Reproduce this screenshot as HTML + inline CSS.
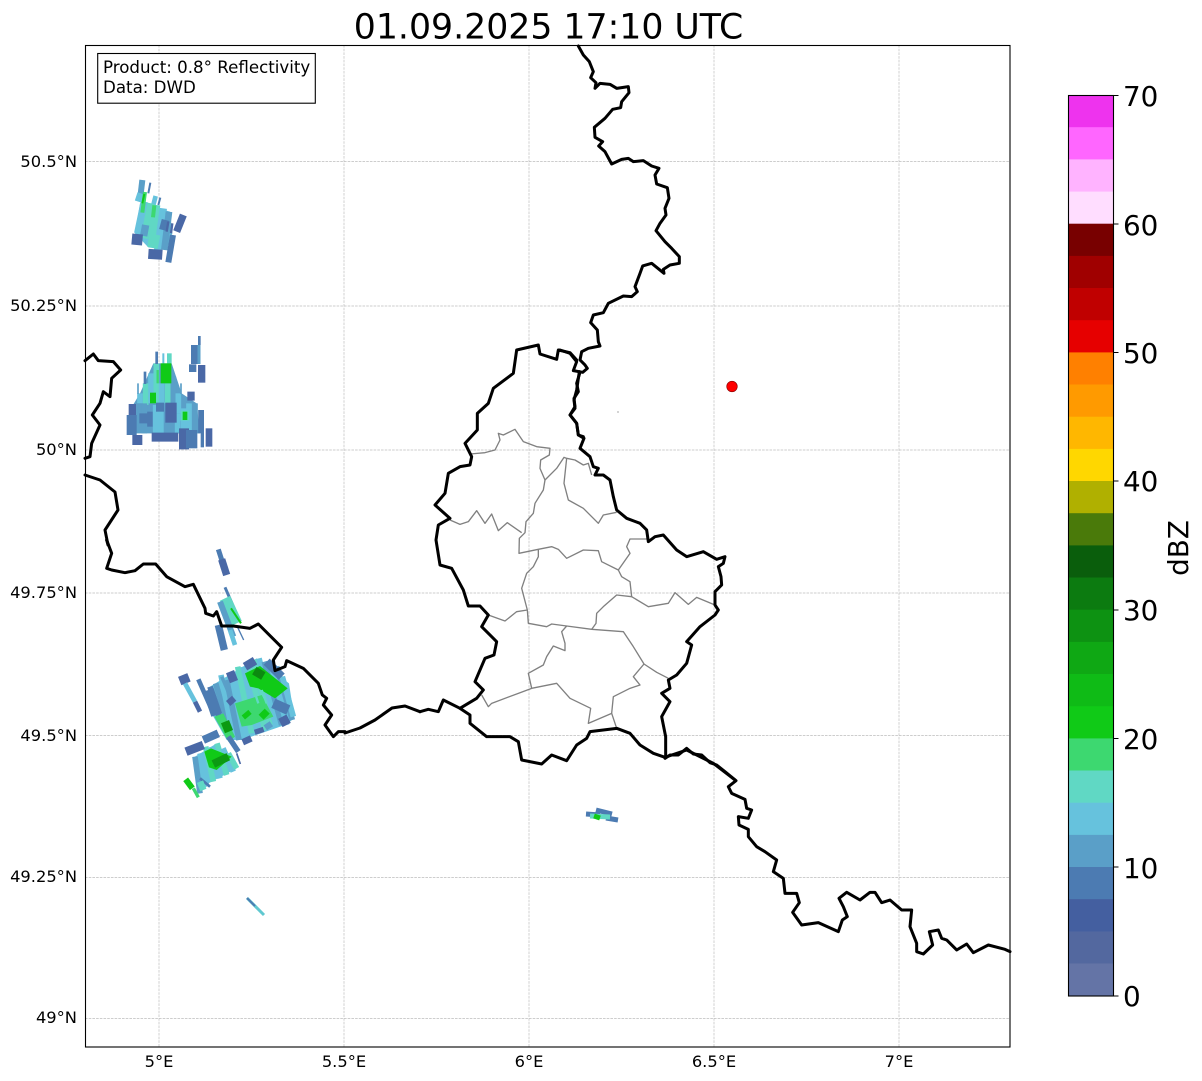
<!DOCTYPE html>
<html><head><meta charset="utf-8"><style>
html,body{margin:0;padding:0;background:#fff}
svg{display:block}
text{font-family:"DejaVu Sans",sans-serif;fill:#000}
.a{font-size:16.300px}
.t{font-size:16.670px}
.c{font-size:27.800px}
</style></head><body>
<svg width="1202" height="1081" viewBox="0 0 1202 1081" xmlns="http://www.w3.org/2000/svg">
<rect width="1202" height="1081" fill="#fff"/>
<text x="548.500" y="38.500" text-anchor="middle" style="font-size:34.700px">01.09.2025 17:10 UTC</text>
<g stroke="#bdbdbd" stroke-width=".7" stroke-dasharray="2.6 1.1" fill="none">
<path d="M159 45V1047M344 45V1047M529 45V1047M714 45V1047M899 45V1047"/>
<path d="M85 161.500H1010M85 306H1010M85 450H1010M85 593H1010M85 735.500H1010M85 877.500H1010M85 1018.500H1010"/>
</g>

<!-- radar blob 1 & 2 -->
<g transform="translate(85,170) scale(.33333)" fill="none" stroke-linecap="butt">
<path fill="#66c2dd" d="M165,100L255,125 262,190 245,240 190,232 150,190Z"/>
<path fill="#5a9fc8" d="M205,580H260L290,670 335,700 345,790H135V720L165,670Z"/>
<path stroke="#5a9fc8" stroke-width="18" d="M172,30L165,90"/>
<path stroke="#66c2dd" stroke-width="22" d="M168,70L160,95"/>
<path stroke="#66c2dd" stroke-width="14" d="M212,78L205,105"/>
<path stroke="#4c7bb2" stroke-width="6" d="M196,38L190,70M226,83L220,105"/>
<path stroke="#66c2dd" stroke-width="22" d="M178,95L158,190"/>
<path stroke="#60d8c4" stroke-width="22" d="M198,100L178,205"/>
<path stroke="#60d8c4" stroke-width="22" d="M215,105L198,232"/>
<path stroke="#66c2dd" stroke-width="22" d="M235,115L218,240"/>
<path stroke="#5a9fc8" stroke-width="20" d="M252,125L238,240"/>
<path stroke="#5a9fc8" stroke-width="22" d="M182,165L176,198"/>
<path stroke="#4c7bb2" stroke-width="24" d="M242,150L234,180"/>
<path stroke="#60d8c4" stroke-width="16" d="M218,195L210,235"/>
<path stroke="#3dd870" stroke-width="12" d="M180,66L172,128M208,106L204,142"/>
<path stroke="#10ca17" stroke-width="6" d="M178,72L172,100"/>
<path stroke="#4a68a6" stroke-width="22" d="M295,135L275,185"/>
<path stroke="#4a68a6" stroke-width="32" d="M158,192L155,225"/>
<path stroke="#4a68a6" stroke-width="42" d="M212,238L210,268"/>
<path stroke="#4c7bb2" stroke-width="18" d="M264,195L250,277"/>
<path stroke="#4a68a6" stroke-width="7" d="M250,155L245,185M262,160L258,190"/>

<g stroke-width="17">
<path stroke="#66c2dd" d="M165,670V700"/>
<path stroke="#60d8c4" d="M182,640V705"/>
<path stroke="#66c2dd" d="M198,610V700"/>
<path stroke="#60d8c4" d="M214,580V700"/>
<path stroke="#66c2dd" d="M230,640V705"/>
<path stroke="#60d8c4" d="M248,640V705"/>
<path stroke="#5a9fc8" d="M265,620V710"/>
<path stroke="#66c2dd" d="M280,670V730"/>
<path stroke="#5a9fc8" d="M160,700V770M178,700V790"/>
<path stroke="#4c7bb2" d="M195,725V770"/>
<path stroke="#66c2dd" d="M212,705V795M228,705V790"/>
<path stroke="#5a9fc8" d="M245,700V790"/>
<path stroke="#66c2dd" d="M278,730V790M296,715V790M312,700V785"/>
<path stroke="#5a9fc8" d="M330,700V790"/>
<path stroke="#4c7bb2" d="M348,720V790"/>
</g>
<path stroke="#4c7bb2" stroke-width="8" d="M215,545V582M180,605V642"/>
<path stroke="#66c2dd" stroke-width="6" d="M235,550V582"/>
<path stroke="#60d8c4" stroke-width="14" d="M253,550V582"/>
<path stroke="#5a9fc8" stroke-width="5" d="M159,640V672M288,640V672"/>
<path stroke="#10ca17" stroke-width="32" d="M243,580V640"/>
<path stroke="#3dd870" stroke-width="7" d="M218,600V640"/>
<path stroke="#10ca17" stroke-width="18" d="M204,668V700"/>
<path stroke="#4a68a6" stroke-width="22" d="M318,665V692M142,702V735"/>
<path stroke="#4c7bb2" stroke-width="24" d="M225,698V725"/>
<path stroke="#4a68a6" stroke-width="34" d="M258,698V758"/>
<path stroke="#4c7bb2" stroke-width="30" d="M140,735V795M178,730V760"/>
<path stroke="#4a68a6" stroke-width="30" d="M157,795V825M297,775V838"/>
<path stroke="#4a68a6" stroke-width="80" d="M240,788V815"/>
<path stroke="#4c7bb2" stroke-width="34" d="M320,780V835"/>
<path stroke="#4a68a6" stroke-width="20" d="M372,775V830"/>
<path stroke="#4c7bb2" stroke-width="10" d="M352,720V832"/>
<path stroke="#60d8c4" stroke-width="26" d="M300,722V752"/>
<path stroke="#10ca17" stroke-width="14" d="M300,725V750"/>
<path stroke="#4c7bb2" stroke-width="20" d="M328,525V582"/>
<path stroke="#4c7bb2" stroke-width="8" d="M343,498V525"/>
<path stroke="#5a9fc8" stroke-width="9" d="M342,525V582"/>
<path stroke="#4a68a6" stroke-width="22" d="M350,585V638"/>
<path stroke="#4c7bb2" stroke-width="22" d="M323,583V606"/>
</g>

<!-- radar blob 3 -->
<g transform="translate(85,540) scale(.33333)" fill="none">
<path stroke="#4c7bb2" stroke-width="15" d="M400,28L415,75"/>
<path stroke="#4a68a6" stroke-width="22" d="M410,58L425,105"/>
<path stroke="#4c7bb2" stroke-width="9" d="M420,142L465,245"/>
<path stroke="#60d8c4" stroke-width="34" d="M420,175L455,250"/>
<path stroke="#5a9fc8" stroke-width="18" d="M405,185L445,290"/>
<path stroke="#4c7bb2" stroke-width="22" d="M400,255L418,330"/>
<path stroke="#66c2dd" stroke-width="14" d="M435,270L450,315"/>
<path stroke="#4c7bb2" stroke-width="4" d="M457,260L476,300"/>
<path stroke="#10ca17" stroke-width="6" d="M438,205L468,250"/>

<path fill="#66c2dd" d="M375,440L515,355 612,430 628,535 600,555 470,600 425,600 385,530Z"/>
<g stroke-width="17">
<path stroke="#4c7bb2" d="M375,440L405,540"/>
<path stroke="#5a9fc8" d="M392,430L430,560"/>
<path stroke="#66c2dd" d="M408,405L445,590"/>
<path stroke="#5a9fc8" d="M425,420L462,600"/>
<path stroke="#66c2dd" d="M442,400L482,590"/>
<path stroke="#60d8c4" d="M458,380L500,580"/>
<path stroke="#66c2dd" d="M474,380L520,560"/>
<path stroke="#60d8c4" d="M490,370L540,570"/>
<path stroke="#60d8c4" d="M506,360L555,555"/>
<path stroke="#66c2dd" d="M522,355L572,550"/>
<path stroke="#5a9fc8" d="M538,365L590,555"/>
<path stroke="#66c2dd" d="M556,365L605,555"/>
<path stroke="#5a9fc8" d="M575,380L622,540"/>
<path stroke="#66c2dd" d="M592,410L625,530"/>
</g>
<path fill="#3dd870" d="M450,490L530,465 565,530 500,555 470,560Z"/>
<path fill="#10ca17" d="M480,400L525,378 608,445 570,475 520,445 495,440Z"/>
<path stroke="#60d8c4" stroke-width="7" d="M530,450L545,490M505,445L520,490"/>
<path stroke="#0c8a10" stroke-width="26" d="M508,392L535,408"/>
<path stroke="#10ca17" stroke-width="26" d="M480,518L490,530M530,515L545,530"/>
<path fill="#3dd870" d="M388,530L415,520 450,590 430,605Z"/>
<path stroke="#0c9a12" stroke-width="26" d="M420,545L432,575"/>
<path stroke="#4a68a6" stroke-width="26" d="M480,380L510,362M435,395L447,425"/>
<path stroke="#4c7bb2" stroke-width="26" d="M545,365L590,410"/>
<path stroke="#4c7bb2" stroke-width="30" d="M565,490L610,510"/>
<path stroke="#4a68a6" stroke-width="28" d="M592,530L605,555M520,565L525,580M482,592L490,610"/>
<path stroke="#5a9fc8" stroke-width="22" d="M545,550L555,565"/>
<path stroke="#4a68a6" stroke-width="30" d="M293,405L303,430"/>
<path stroke="#66c2dd" stroke-width="14" d="M300,430L330,485"/>
<path stroke="#4a68a6" stroke-width="14" d="M330,485L345,515"/>
<path stroke="#4c7bb2" stroke-width="14" d="M340,418L385,520"/>
<path stroke="#4c7bb2" stroke-width="34" d="M370,450L395,525"/>
<path stroke="#5a9fc8" stroke-width="10" d="M410,410L440,480"/>
<path stroke="#4a68a6" stroke-width="24" d="M432,475L445,490"/>
<path stroke="#4c7bb2" stroke-width="16" d="M430,590L460,635"/>
<path stroke="#4a68a6" stroke-width="5" d="M455,640L466,672"/>

<path fill="#66c2dd" d="M330,650L395,610 455,685 370,730 345,760Z"/>
<g stroke-width="17">
<path stroke="#5a9fc8" d="M330,650L345,760"/>
<path stroke="#66c2dd" d="M345,640L365,740"/>
<path stroke="#60d8c4" d="M362,620L385,725"/>
<path stroke="#66c2dd" d="M380,620L405,715"/>
<path stroke="#60d8c4" d="M396,610L425,705"/>
<path stroke="#66c2dd" d="M414,625L445,695"/>
<path stroke="#60d8c4" d="M430,640L455,685"/>
</g>
<path fill="#10ca17" d="M358,635L378,625 440,650 395,690 372,682Z"/>
<path stroke="#0c9a12" stroke-width="24" d="M385,672L430,650"/>
<path stroke="#4a68a6" stroke-width="26" d="M303,635L355,615"/>
<path stroke="#4c7bb2" stroke-width="24" d="M355,600L400,580"/>
<path stroke="#4c7bb2" stroke-width="8" d="M345,715L375,740"/>
<path stroke="#10ca17" stroke-width="18" d="M302,718L322,745"/>
<path stroke="#3dd870" stroke-width="10" d="M325,745L340,772"/>
<path stroke="#60d8c4" stroke-width="20" d="M345,725L355,750"/>
</g>

<!-- small blobs -->
<path d="M586 814L600 815M596 810L612 814M606 818L618 820" stroke="#4c7bb2" stroke-width="5" fill="none"/>
<path d="M590 816L610 817" stroke="#60d8c4" stroke-width="5" fill="none"/>
<path d="M594 816L600 818" stroke="#10ca17" stroke-width="5" fill="none"/>
<path d="M247 898L264 915" stroke="#60c8d0" stroke-width="3" fill="none"/>
<path d="M247 898L255 906" stroke="#4c7bb2" stroke-width="2" fill="none"/>

<!-- grey inner boundaries -->
<g transform="translate(420,340) scale(.33333)" fill="none" stroke="#808080" stroke-width="4" stroke-linejoin="round">
<path d="M150,342L195,338 225,330 240,300 235,280 250,285 285,268 310,305 350,320 390,325 388,345 362,360 360,385 375,420 410,385 432,352 440,355 465,360 490,375 505,370 515,405"/>
<path d="M440,355L432,430 445,480 490,505 535,550 550,525 590,517"/>
<path d="M375,420L370,450 345,490 340,520 318,545 315,578 298,595 297,640 355,628 395,620 415,628 440,655 490,630 535,632 545,665 595,690 605,710 630,725 635,770 590,765 550,800 530,820 528,850 515,868 440,858 395,852 380,860 325,850 322,810 305,745 320,700 340,680 355,650 355,628"/>
<path d="M90,540L120,553 145,545 170,512 195,550 215,522 235,572 262,548 305,578"/>
<path d="M595,690L630,640 620,620 630,597 680,597"/>
<path d="M635,770L685,800 745,790 765,758 805,793 830,772 885,795"/>
<path d="M205,825L255,843 290,815 322,810"/>
<path d="M440,858L425,875 435,910 435,932 400,918 380,950 370,975 325,1000 335,1045"/>
<path d="M515,868L610,875 640,920 672,972 710,997 745,1015"/>
<path d="M672,972L640,1010 660,1035 630,1045 580,1070 575,1120 590,1165"/>
<path d="M575,1120L505,1150 512,1105 450,1075 410,1030 335,1045 295,1060 215,1090 205,1100 185,1065"/>
</g>

<!-- black borders -->
<g fill="none" stroke="#000" stroke-linejoin="round" stroke-linecap="round">
<g transform="translate(560,40) scale(.33333)" stroke-width="9">
<path d="M55,18L70,45 88,65 100,95 92,113 108,128 105,145 120,130 150,133 170,145 205,140 207,158 185,185 182,203 158,208 135,235 103,262 105,292 128,305 116,318 135,335 155,372 185,358 205,355 220,365 250,362 275,378 297,385 285,405 290,432 322,443 327,475 315,505 318,525 300,550 288,572 315,605 335,625 358,650 358,670 330,675 310,688 312,700 275,670 248,678 240,700 225,740 232,755 215,770 190,768 145,790 130,818 100,825 92,848 112,870 115,905 120,918 85,925 65,935 60,960 75,975 82,985 68,997 40,992 50,965 30,940 0,930"/>
<path d="M60,997L50,1030 55,1055 42,1075 45,1100 30,1125 50,1150 55,1185 70,1190"/>
</g>
<g transform="translate(420,340) scale(.33333)" stroke-width="9">
<path d="M470,60L450,38 415,30 410,58 360,42 355,15 290,30 280,100 220,145 205,190 172,220 172,270 135,310 155,350 150,375 120,380 85,400 75,460 45,495 90,535 55,555 48,600 60,675 95,685 130,750 145,798 180,798 205,825 185,860 230,905 222,945 195,955 165,1025 190,1050 170,1075 120,1105 70,1080 55,1115 25,1108 0,1115"/>
<path d="M478,95L470,150 462,180 465,205 450,225 470,250 475,285 492,295 480,325 510,350 520,380 535,385 525,405 550,405 570,420 580,470 590,510 620,535 660,550 680,570 685,605 705,590 730,585 770,630 800,650 850,635 890,658 915,650 910,670 895,680 903,710 905,735 885,755 885,795 895,810 885,825 840,860 800,905 815,915 800,970 770,1005 745,1020 750,1045 725,1060 750,1085 725,1130 737,1190 737,1250"/>
<path d="M120,1105L150,1125 150,1150 200,1190 270,1190 295,1205 305,1260 365,1272 395,1245 440,1262 470,1215 500,1195 510,1175 590,1165 630,1180 660,1215 700,1240 735,1252 800,1230 880,1270 945,1320"/>
</g>
<g transform="translate(640,730) scale(.33333)" stroke-width="9">
<path d="M75,85L90,75 115,75 140,55 160,72 185,75 210,98 230,105 255,125 288,152 265,170 275,190 315,208 320,235 335,240 325,265 295,260 297,285 325,298 325,320 350,350 375,365 410,390 400,425 430,445 435,490 470,490 478,518 458,547 485,585 535,578 595,605 607,570 622,560 610,530 597,505 620,487 660,510 690,487 705,487 725,518 750,510 785,540 815,540 810,590 830,640 830,665 850,672 878,645 868,605 895,600 905,625 920,630 950,660 980,642 1000,668 1045,645 1095,658 1110,665"/>
</g>
<g transform="translate(85,540) scale(.33333)" stroke-width="9">
<path d="M65,0L80,40 65,85 80,90 120,98 150,92 175,72 212,72 245,110 300,140 325,133 360,205 362,220 385,228 395,215 410,258 445,258 495,265 520,252 590,322 565,360 570,392 600,380 605,362 655,385 700,430 712,465 725,475 715,495 740,525 720,555 745,590 760,575 780,575"/>
</g>
<g transform="translate(85,170) scale(.33333)" stroke-width="9">
<path d="M0,572L25,552 40,572 85,575 107,600 80,625 75,680 55,665 45,700 22,735 45,765 20,820 15,860 0,865"/>
</g>
<path stroke-width="3" d="M85 475L100 480 115 492 118 510 105 530 108 545 106.700 540M345 733L360 728 375 720 392 708 405 706 420 711.700"/>
</g>

<rect x="617.500" y="411.500" width="1" height="1" fill="#555"/>
<circle cx="732" cy="386.500" r="5.300" fill="#f00" stroke="#800" stroke-width=".6"/>

<!-- axes frame -->
<rect x="85.500" y="45.500" width="924.500" height="1001.500" fill="none" stroke="#000" stroke-width="1.100"/>

<!-- info box -->
<rect x="97.700" y="53.500" width="217.600" height="49.700" fill="#fff" stroke="#000" stroke-width="1.100"/>
<text class="t" x="103" y="73">Product: 0.8° Reflectivity</text>
<text class="t" x="103" y="93">Data: DWD</text>

<!-- axis labels -->
<g>
<text class="a" x="77" y="167" text-anchor="end">50.5°N</text>
<text class="a" x="77" y="311" text-anchor="end">50.25°N</text>
<text class="a" x="77" y="455" text-anchor="end">50°N</text>
<text class="a" x="77" y="598" text-anchor="end">49.75°N</text>
<text class="a" x="77" y="741" text-anchor="end">49.5°N</text>
<text class="a" x="77" y="882" text-anchor="end">49.25°N</text>
<text class="a" x="77" y="1023" text-anchor="end">49°N</text>
<text class="a" x="159" y="1067" text-anchor="middle">5°E</text>
<text class="a" x="344" y="1067" text-anchor="middle">5.5°E</text>
<text class="a" x="529" y="1067" text-anchor="middle">6°E</text>
<text class="a" x="714" y="1067" text-anchor="middle">6.5°E</text>
<text class="a" x="899" y="1067" text-anchor="middle">7°E</text>
</g>

<!-- colorbar -->
<g>
<rect x="1068.500" y="95.500" width="45" height="32.700" fill="#ee33ee"/>
<rect x="1068.500" y="127.200" width="45" height="32.700" fill="#ff66ff"/>
<rect x="1068.500" y="159.400" width="45" height="32.700" fill="#ffb3ff"/>
<rect x="1068.500" y="191.600" width="45" height="32.700" fill="#ffddff"/>
<rect x="1068.500" y="223.700" width="45" height="32.700" fill="#780000"/>
<rect x="1068.500" y="255.900" width="45" height="32.700" fill="#a00000"/>
<rect x="1068.500" y="288" width="45" height="32.700" fill="#c00000"/>
<rect x="1068.500" y="320.200" width="45" height="32.700" fill="#e60000"/>
<rect x="1068.500" y="352.400" width="45" height="32.700" fill="#ff8000"/>
<rect x="1068.500" y="384.500" width="45" height="32.700" fill="#ff9a00"/>
<rect x="1068.500" y="416.700" width="45" height="32.700" fill="#ffb700"/>
<rect x="1068.500" y="448.900" width="45" height="32.700" fill="#ffd700"/>
<rect x="1068.500" y="481" width="45" height="32.700" fill="#b0b000"/>
<rect x="1068.500" y="513.200" width="45" height="32.700" fill="#4a7a0a"/>
<rect x="1068.500" y="545.400" width="45" height="32.700" fill="#0a5e0c"/>
<rect x="1068.500" y="577.500" width="45" height="32.700" fill="#0c7b10"/>
<rect x="1068.500" y="609.700" width="45" height="32.700" fill="#0d9212"/>
<rect x="1068.500" y="641.900" width="45" height="32.700" fill="#0fa814"/>
<rect x="1068.500" y="674" width="45" height="32.700" fill="#0fbb16"/>
<rect x="1068.500" y="706.200" width="45" height="32.700" fill="#10ca17"/>
<rect x="1068.500" y="738.400" width="45" height="32.700" fill="#3dd870"/>
<rect x="1068.500" y="770.500" width="45" height="32.700" fill="#60d8c4"/>
<rect x="1068.500" y="802.700" width="45" height="32.700" fill="#66c2dd"/>
<rect x="1068.500" y="834.900" width="45" height="32.700" fill="#5a9fc8"/>
<rect x="1068.500" y="867" width="45" height="32.700" fill="#4c7bb2"/>
<rect x="1068.500" y="899.200" width="45" height="32.700" fill="#445fa0"/>
<rect x="1068.500" y="931.400" width="45" height="32.700" fill="#53689f"/>
<rect x="1068.500" y="963.500" width="45" height="32.500" fill="#6474a6"/>
</g>
<rect x="1068.500" y="95.500" width="45" height="900.500" fill="none" stroke="#000" stroke-width="1.100"/>
<path stroke="#000" stroke-width="1.100" d="M1113 95.500H1118.500M1113 224H1118.500M1113 352.500H1118.500M1113 481H1118.500M1113 610H1118.500M1113 738.500H1118.500M1113 867H1118.500M1113 996H1118.500"/>
<text class="c" x="1123" y="106">70</text>
<text class="c" x="1123" y="235">60</text>
<text class="c" x="1123" y="363">50</text>
<text class="c" x="1123" y="491">40</text>
<text class="c" x="1123" y="620">30</text>
<text class="c" x="1123" y="749">20</text>
<text class="c" x="1123" y="878">10</text>
<text class="c" x="1123" y="1006">0</text>
<text class="c" transform="translate(1188,548) rotate(-90)" text-anchor="middle">dBZ</text>
</svg>
</body></html>
